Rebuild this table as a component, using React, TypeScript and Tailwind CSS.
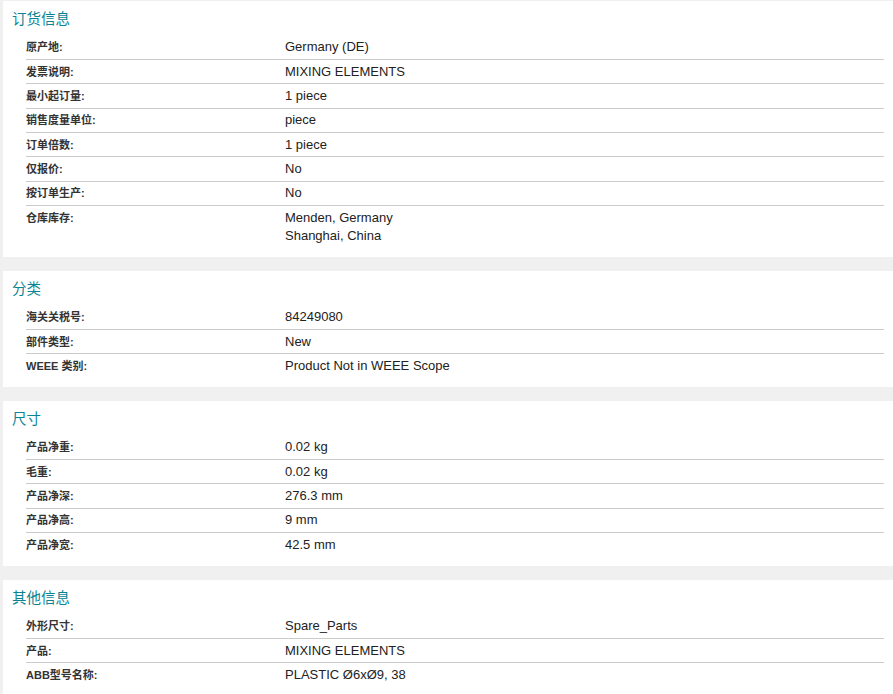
import React from 'react';

type Row = { label: string; value: string[] };
type Section = { title: string; rows: Row[] };

const sections: Section[] = [
    {
        title: '订货信息',
        rows: [
            { label: '原产地:', value: ['Germany (DE)'] },
            { label: '发票说明:', value: ['MIXING ELEMENTS'] },
            { label: '最小起订量:', value: ['1 piece'] },
            { label: '销售度量单位:', value: ['piece'] },
            { label: '订单倍数:', value: ['1 piece'] },
            { label: '仅报价:', value: ['No'] },
            { label: '按订单生产:', value: ['No'] },
            { label: '仓库库存:', value: ['Menden, Germany', 'Shanghai, China'] },
        ],
    },
    {
        title: '分类',
        rows: [
            { label: '海关关税号:', value: ['84249080'] },
            { label: '部件类型:', value: ['New'] },
            { label: 'WEEE 类别:', value: ['Product Not in WEEE Scope'] },
        ],
    },
    {
        title: '尺寸',
        rows: [
            { label: '产品净重:', value: ['0.02 kg'] },
            { label: '毛重:', value: ['0.02 kg'] },
            { label: '产品净深:', value: ['276.3 mm'] },
            { label: '产品净高:', value: ['9 mm'] },
            { label: '产品净宽:', value: ['42.5 mm'] },
        ],
    },
    {
        title: '其他信息',
        rows: [
            { label: '外形尺寸:', value: ['Spare_Parts'] },
            { label: '产品:', value: ['MIXING ELEMENTS'] },
            { label: 'ABB型号名称:', value: ['PLASTIC Ø6xØ9, 38'] },
        ],
    },
];

const font = "font-['Liberation_Sans','Noto_Sans_CJK_SC',sans-serif]";

const SectionCard: React.FC<{ section: Section }> = ({ section }) => (
    <div className="bg-white pt-[8px] pb-[9px] pl-[9px]">
        <h2 className="text-[14.5px] leading-[20px] text-[#0a8494] font-normal mb-[6.5px]">
            {section.title}
        </h2>
        <div className="ml-[14px] mr-[9px]">
            {section.rows.map((row, i) => (
                <div
                    key={row.label}
                    className={`flex pt-[2.7px] pb-[2.7px] ${i < section.rows.length - 1 ? 'border-b border-[#cbcbcb]' : ''}`}
                >
                    <div className="w-[259px] shrink-0 text-[11px] leading-[18px] font-bold text-[#333]">
                        {row.label}
                    </div>
                    <div className="text-[13px] leading-[18px] text-[#222]">
                        {row.value.map((v) => (
                            <div key={v}>{v}</div>
                        ))}
                    </div>
                </div>
            ))}
        </div>
    </div>
);

export default function App() {
    return (
        <div className={`min-h-screen bg-[#f0f0f0] pt-px pl-[3px] ${font}`}>
            <div className="flex flex-col gap-[14.5px]">
                {sections.map((s) => (
                    <SectionCard key={s.title} section={s} />
                ))}
            </div>
        </div>
    );
}
